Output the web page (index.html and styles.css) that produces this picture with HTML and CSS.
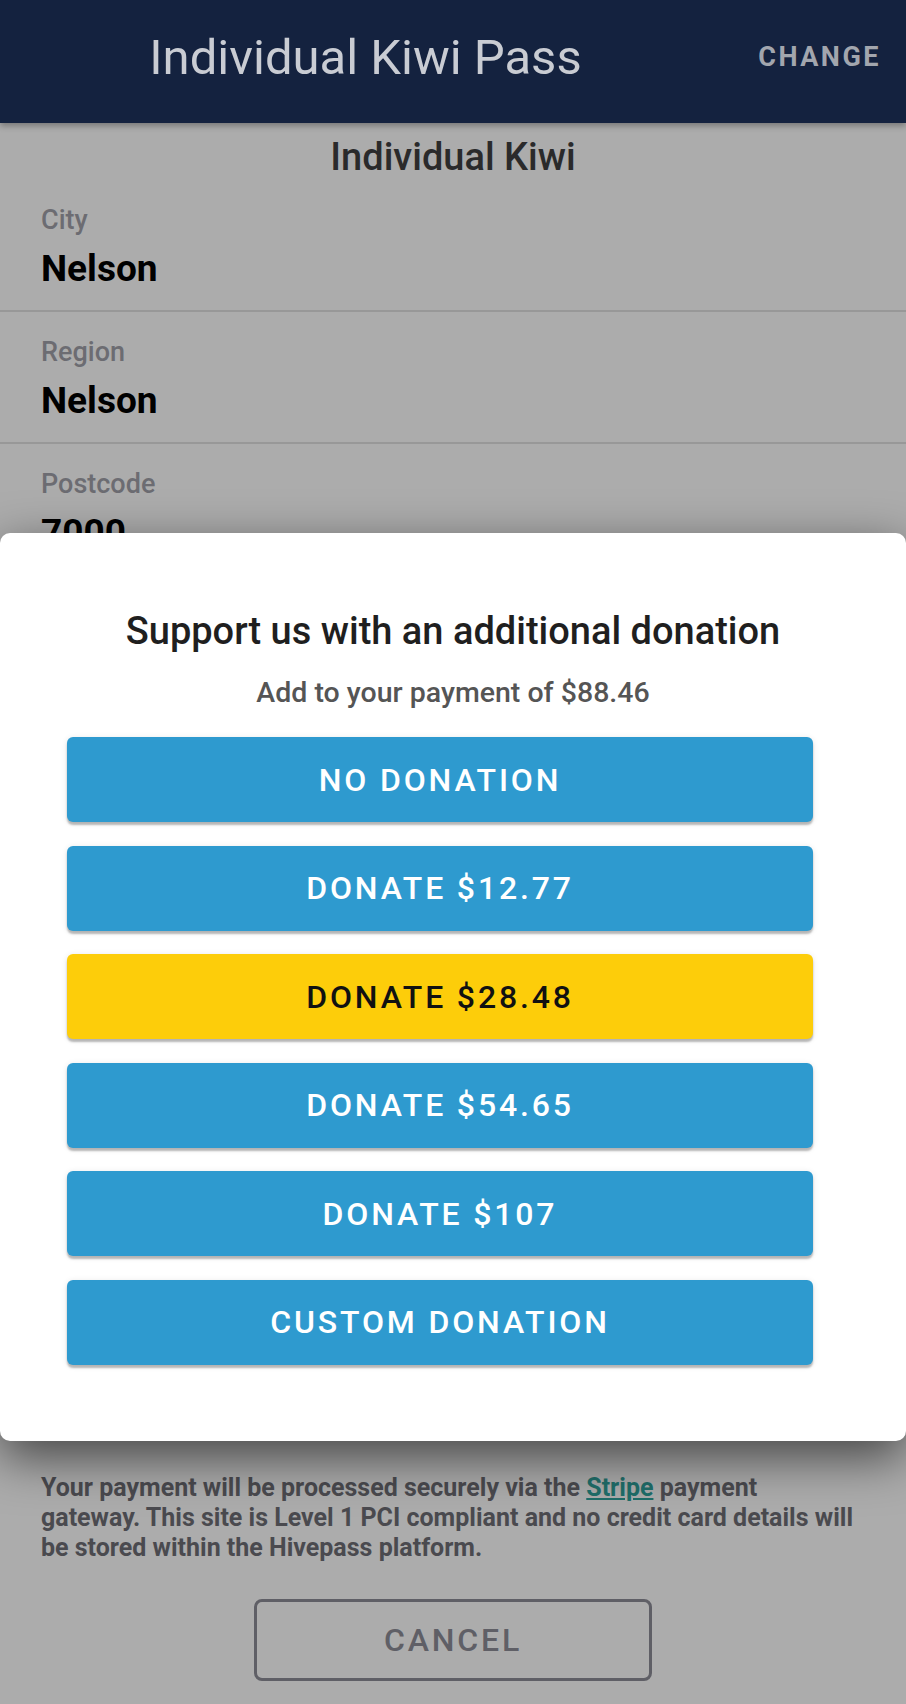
FILE: index.html
```html
<!DOCTYPE html>
<html lang="en">
<head>
    <meta charset="UTF-8">
    <meta name="viewport" content="width=device-width, initial-scale=1">
    <title>Individual Kiwi Pass</title>
    <link rel="stylesheet" href="styles.css">
</head>
<body>
    <header class="topbar">
        <h1 class="topbar-title">Individual Kiwi Pass</h1>
        <button class="topbar-change">CHANGE</button>
    </header>

    <main class="page">
        <h2 class="pass-name">Individual Kiwi</h2>
        <div class="detail">
            <div class="detail-label">City</div>
            <div class="detail-value">Nelson</div>
        </div>
        <div class="detail">
            <div class="detail-label">Region</div>
            <div class="detail-value">Nelson</div>
        </div>
        <div class="detail">
            <div class="detail-label">Postcode</div>
            <div class="detail-value">7000</div>
        </div>

        <p class="notice">Your payment will be processed securely via the <a href="#">Stripe</a> payment gateway. This site is Level 1 PCI compliant and no credit card details will be stored within the Hivepass platform.</p>
        <div class="actions">
            <button class="btn-cancel">CANCEL</button>
        </div>
    </main>

    <div class="donate-sheet">
        <h3 class="donate-title">Support us with an additional donation</h3>
        <p class="donate-sub">Add to your payment of $88.46</p>
        <div class="donate-list">
            <button class="donate-btn">NO DONATION</button>
            <button class="donate-btn">DONATE $12.77</button>
            <button class="donate-btn donate-btn--pick">DONATE $28.48</button>
            <button class="donate-btn">DONATE $54.65</button>
            <button class="donate-btn">DONATE $107</button>
            <button class="donate-btn">CUSTOM DONATION</button>
        </div>
    </div>
</body>
</html>
```

FILE: styles.css
```css
body {
    margin: 0;
    background: #acacac;
    font-family: Roboto, "Liberation Sans", sans-serif;
    position: relative;
    min-height: 1704px;
    overflow: hidden;
}
button {
    font-family: inherit;
    cursor: pointer;
}

/* шапка */
.topbar {
    height: 123px;
    background: #14223f;
    display: flex;
    align-items: center;
    box-shadow: 0 3px 6px rgba(0, 0, 0, 0.3);
    position: relative;
}
.topbar-title {
    flex: 1;
    margin: 0;
    padding-bottom: 9px;
    text-align: center;
    font-size: 49px;
    font-weight: 400;
    color: #c9ccd3;
}
.topbar-change {
    width: 175px;
    padding: 0 25px 10px;
    background: none;
    border: 0;
    font-size: 27px;
    font-weight: 700;
    letter-spacing: 2.5px;
    color: #a2a6ae;
    text-align: right;
}

/* детали пропуска */
.pass-name {
    margin: 11px 0 0;
    text-align: center;
    font-size: 38px;
    line-height: 46px;
    font-weight: 500;
    color: #2a2a2b;
}
.detail {
    padding: 24px 41px 19px;
    border-bottom: 2px solid #989898;
}
.detail-label {
    font-size: 27px;
    line-height: 32px;
    font-weight: 500;
    color: #6c6c72;
}
.detail-value {
    margin-top: 11px;
    font-size: 37px;
    line-height: 44px;
    font-weight: 700;
    color: #000;
}

.notice {
    margin: 897px 0 0;
    padding: 0 45px 0 41px;
    font-size: 25px;
    line-height: 30px;
    font-weight: 700;
    color: #4a4a4f;
}
.notice a {
    color: #1f6e6a;
}
.actions {
    display: flex;
    justify-content: center;
    margin-top: 36px;
}
.btn-cancel {
    width: 398px;
    height: 82px;
    background: none;
    border: 3px solid #5f5f66;
    border-radius: 8px;
    font-size: 32px;
    font-weight: 500;
    letter-spacing: 2.85px;
    color: #5f5f66;
}

/* окно пожертвования */
.donate-sheet {
    position: absolute;
    top: 533px;
    left: 0;
    right: 0;
    background: #fff;
    border-radius: 10px;
    padding: 76px 0 76px;
    box-shadow: 0 16px 50px rgba(0, 0, 0, 0.6);
}
.donate-title {
    margin: 0;
    text-align: center;
    font-size: 38px;
    line-height: 44px;
    font-weight: 500;
    color: #1f1f1f;
}
.donate-sub {
    margin: 23px 0 0;
    text-align: center;
    font-size: 28.5px;
    line-height: 34px;
    font-weight: 500;
    color: #555;
}
.donate-list {
    display: flex;
    flex-direction: column;
    gap: 23.6px;
    width: 746px;
    margin: 27px 0 0 67px;
}
.donate-btn {
    height: 85px;
    background: #2e9acf;
    border: 0;
    border-radius: 6px;
    font-size: 32px;
    font-weight: 500;
    letter-spacing: 2.85px;
    color: #fff;
    box-shadow: 0 3px 2px rgba(0, 0, 0, 0.25), 0 1px 6px rgba(0, 0, 0, 0.1);
}
.donate-btn--pick {
    background: #fdcd0a;
    color: #111;
}
```
